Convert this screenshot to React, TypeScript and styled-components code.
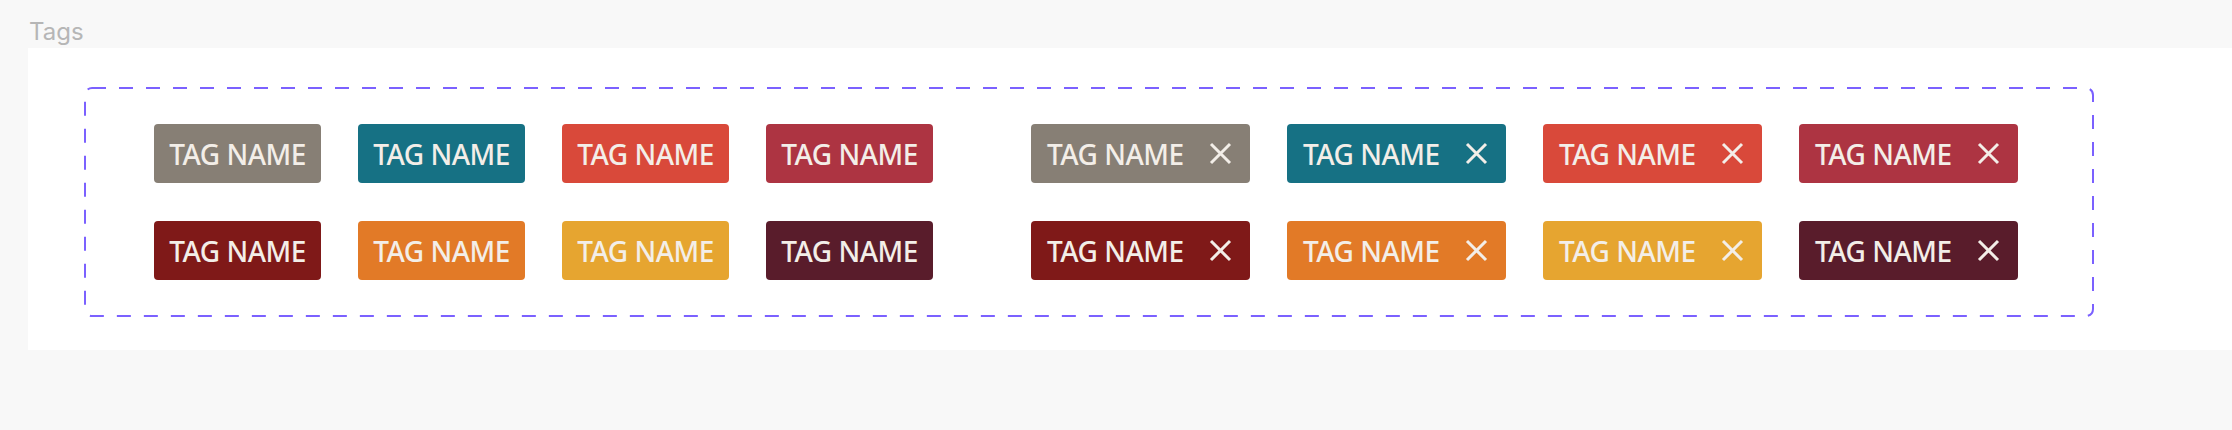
import { memo } from "react";
import styled, { createGlobalStyle } from "styled-components";

const GlobalStyle = createGlobalStyle`
	body {
		margin: 0;
		background: #f8f8f8;
	}
`

const Page = styled.div`
	width: 100%;
	min-height: 430px;
	background: #f8f8f8;
`

const Title = styled.div`
	height: 48px;
	box-sizing: border-box;
	padding: 20px 0 0 29px;
	font-family: Inter, "Liberation Sans", sans-serif;
	font-size: 24px;
	line-height: 24px;
	color: #b6b6b6;
`

const Panel = styled.div`
	margin-left: 28px;
	padding: 39px 0 33px 56px;
	background: #ffffff;
`

// dashed frame, drawn as svg so the dash length matches
const Frame = styled.div`
	display: inline-flex;
	gap: 98px;
	box-sizing: border-box;
	width: 2010px;
	height: 230px;
	padding: 37px 76px 37px 70px;
	background-image: url("data:image/svg+xml,%3Csvg xmlns='http://www.w3.org/2000/svg' width='100%25' height='100%25'%3E%3Crect x='1' y='1' width='2008' height='228' rx='7' ry='7' fill='none' stroke='%237B61FF' stroke-width='2' stroke-dasharray='14 13'/%3E%3C/svg%3E");
	background-repeat: no-repeat;
`

const Group = styled.div`
	display: grid;
	grid-template-columns: repeat(4, auto);
	column-gap: 37px;
	row-gap: 37px;
`

const Tag = styled.div<{ $bg: string; $closable?: boolean }>`
	display: flex;
	align-items: center;
	justify-content: ${(p) => (p.$closable ? "space-between" : "center")};
	box-sizing: border-box;
	width: ${(p) => (p.$closable ? "219px" : "167px")};
	height: 59px;
	padding: ${(p) => (p.$closable ? "0 18px 0 16px" : "0")};
	border-radius: 4px;
	background: ${(p) => p.$bg};
	color: #f3eee8;
	font-family: "Noto Sans", "Open Sans", sans-serif;
	font-weight: 500;
	font-size: 28px;
	letter-spacing: -0.5px;
	white-space: nowrap;
`

const Label = styled.span`
	padding-top: 1px;
`

const Close = styled.svg`
	display: block;
	width: 23px;
	height: 23px;
	flex: none;
`

const colors = [
	"#877f75",
	"#167184",
	"#d9493a",
	"#ad3442",
	"#7f1918",
	"#e27a27",
	"#e6a530",
	"#591c2b",
]

const CloseIcon = () => (
	<Close viewBox="0 0 23 23">
		<path d="M2 2 L21 21 M21 2 L2 21" stroke="#f3eee8" strokeWidth="3" fill="none" />
	</Close>
)

const App = memo(() => {
	return (
		<>
			<GlobalStyle />
			<Page>
				<Title>Tags</Title>
				<Panel>
					<Frame>
						<Group>
							{colors.map((c) => (
								<Tag key={c} $bg={c}>
									<Label>TAG NAME</Label>
								</Tag>
							))}
						</Group>
						<Group>
							{colors.map((c) => (
								<Tag key={c} $bg={c} $closable>
									<Label>TAG NAME</Label>
									<CloseIcon />
								</Tag>
							))}
						</Group>
					</Frame>
				</Panel>
			</Page>
		</>
	);
});

export default App;
